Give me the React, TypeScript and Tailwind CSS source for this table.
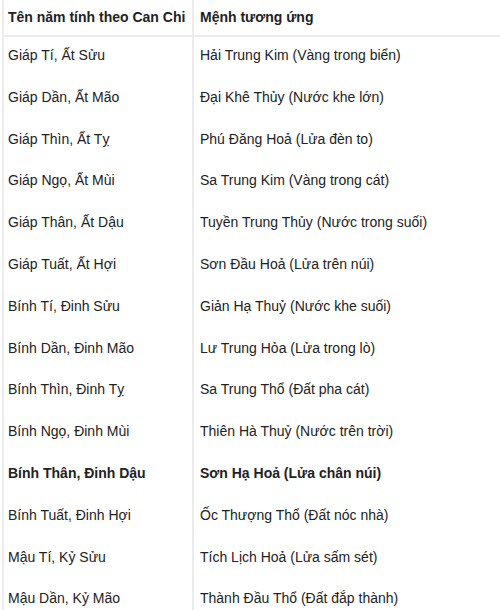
import React from "react";

const rows: [string, string, boolean?][] = [
  ["Giáp Tí, Ất Sửu", "Hải Trung Kim (Vàng trong biển)"],
  ["Giáp Dần, Ất Mão", "Đại Khê Thủy (Nước khe lớn)"],
  ["Giáp Thìn, Ất Tỵ", "Phú Đăng Hoả (Lửa đèn to)"],
  ["Giáp Ngọ, Ất Mùi", "Sa Trung Kim (Vàng trong cát)"],
  ["Giáp Thân, Ất Dậu", "Tuyền Trung Thủy (Nước trong suối)"],
  ["Giáp Tuất, Ất Hợi", "Sơn Đầu Hoả (Lửa trên núi)"],
  ["Bính Tí, Đinh Sửu", "Giản Hạ Thuỷ (Nước khe suối)"],
  ["Bính Dần, Đinh Mão", "Lư Trung Hỏa (Lửa trong lò)"],
  ["Bính Thìn, Đinh Tỵ", "Sa Trung Thổ (Đất pha cát)"],
  ["Bính Ngọ, Đinh Mùi", "Thiên Hà Thuỷ (Nước trên trời)"],
  ["Bính Thân, Đinh Dậu", "Sơn Hạ Hoả (Lửa chân núi)", true],
  ["Bính Tuất, Đinh Hợi", "Ốc Thượng Thổ (Đất nóc nhà)"],
  ["Mậu Tí, Kỷ Sửu", "Tích Lịch Hoả (Lửa sấm sét)"],
  ["Mậu Dần, Kỷ Mão", "Thành Đầu Thổ (Đất đắp thành)"],
];

export default function App() {
  return (
    <div
      className="w-[500px] h-[610px] overflow-hidden bg-white text-[14px] leading-[20px] text-[#222]"
      style={{ fontFamily: '"Liberation Sans", Arial, sans-serif' }}
    >
      <div className="ml-[2px] border-l-2 border-[#ececec]">
        <div className="flex h-[37px] border-b-2 border-[#ececec] font-bold">
          <div className="w-[190px] pl-[4px] pt-[7px] border-r-2 border-[#ececec]">Tên năm tính theo Can Chi</div>
          <div className="flex-1 pl-[6px] pt-[7px]">Mệnh tương ứng</div>
        </div>
        {rows.map(([a, b, bold], i) => (
          <div key={i} className={`flex h-[41.8px] ${bold ? "font-bold" : ""}`}>
            <div className="w-[190px] pl-[4px] pt-[8px] border-r-2 border-[#ececec]">{a}</div>
            <div className="flex-1 pl-[6px] pt-[8px]">{b}</div>
          </div>
        ))}
      </div>
    </div>
  );
}
